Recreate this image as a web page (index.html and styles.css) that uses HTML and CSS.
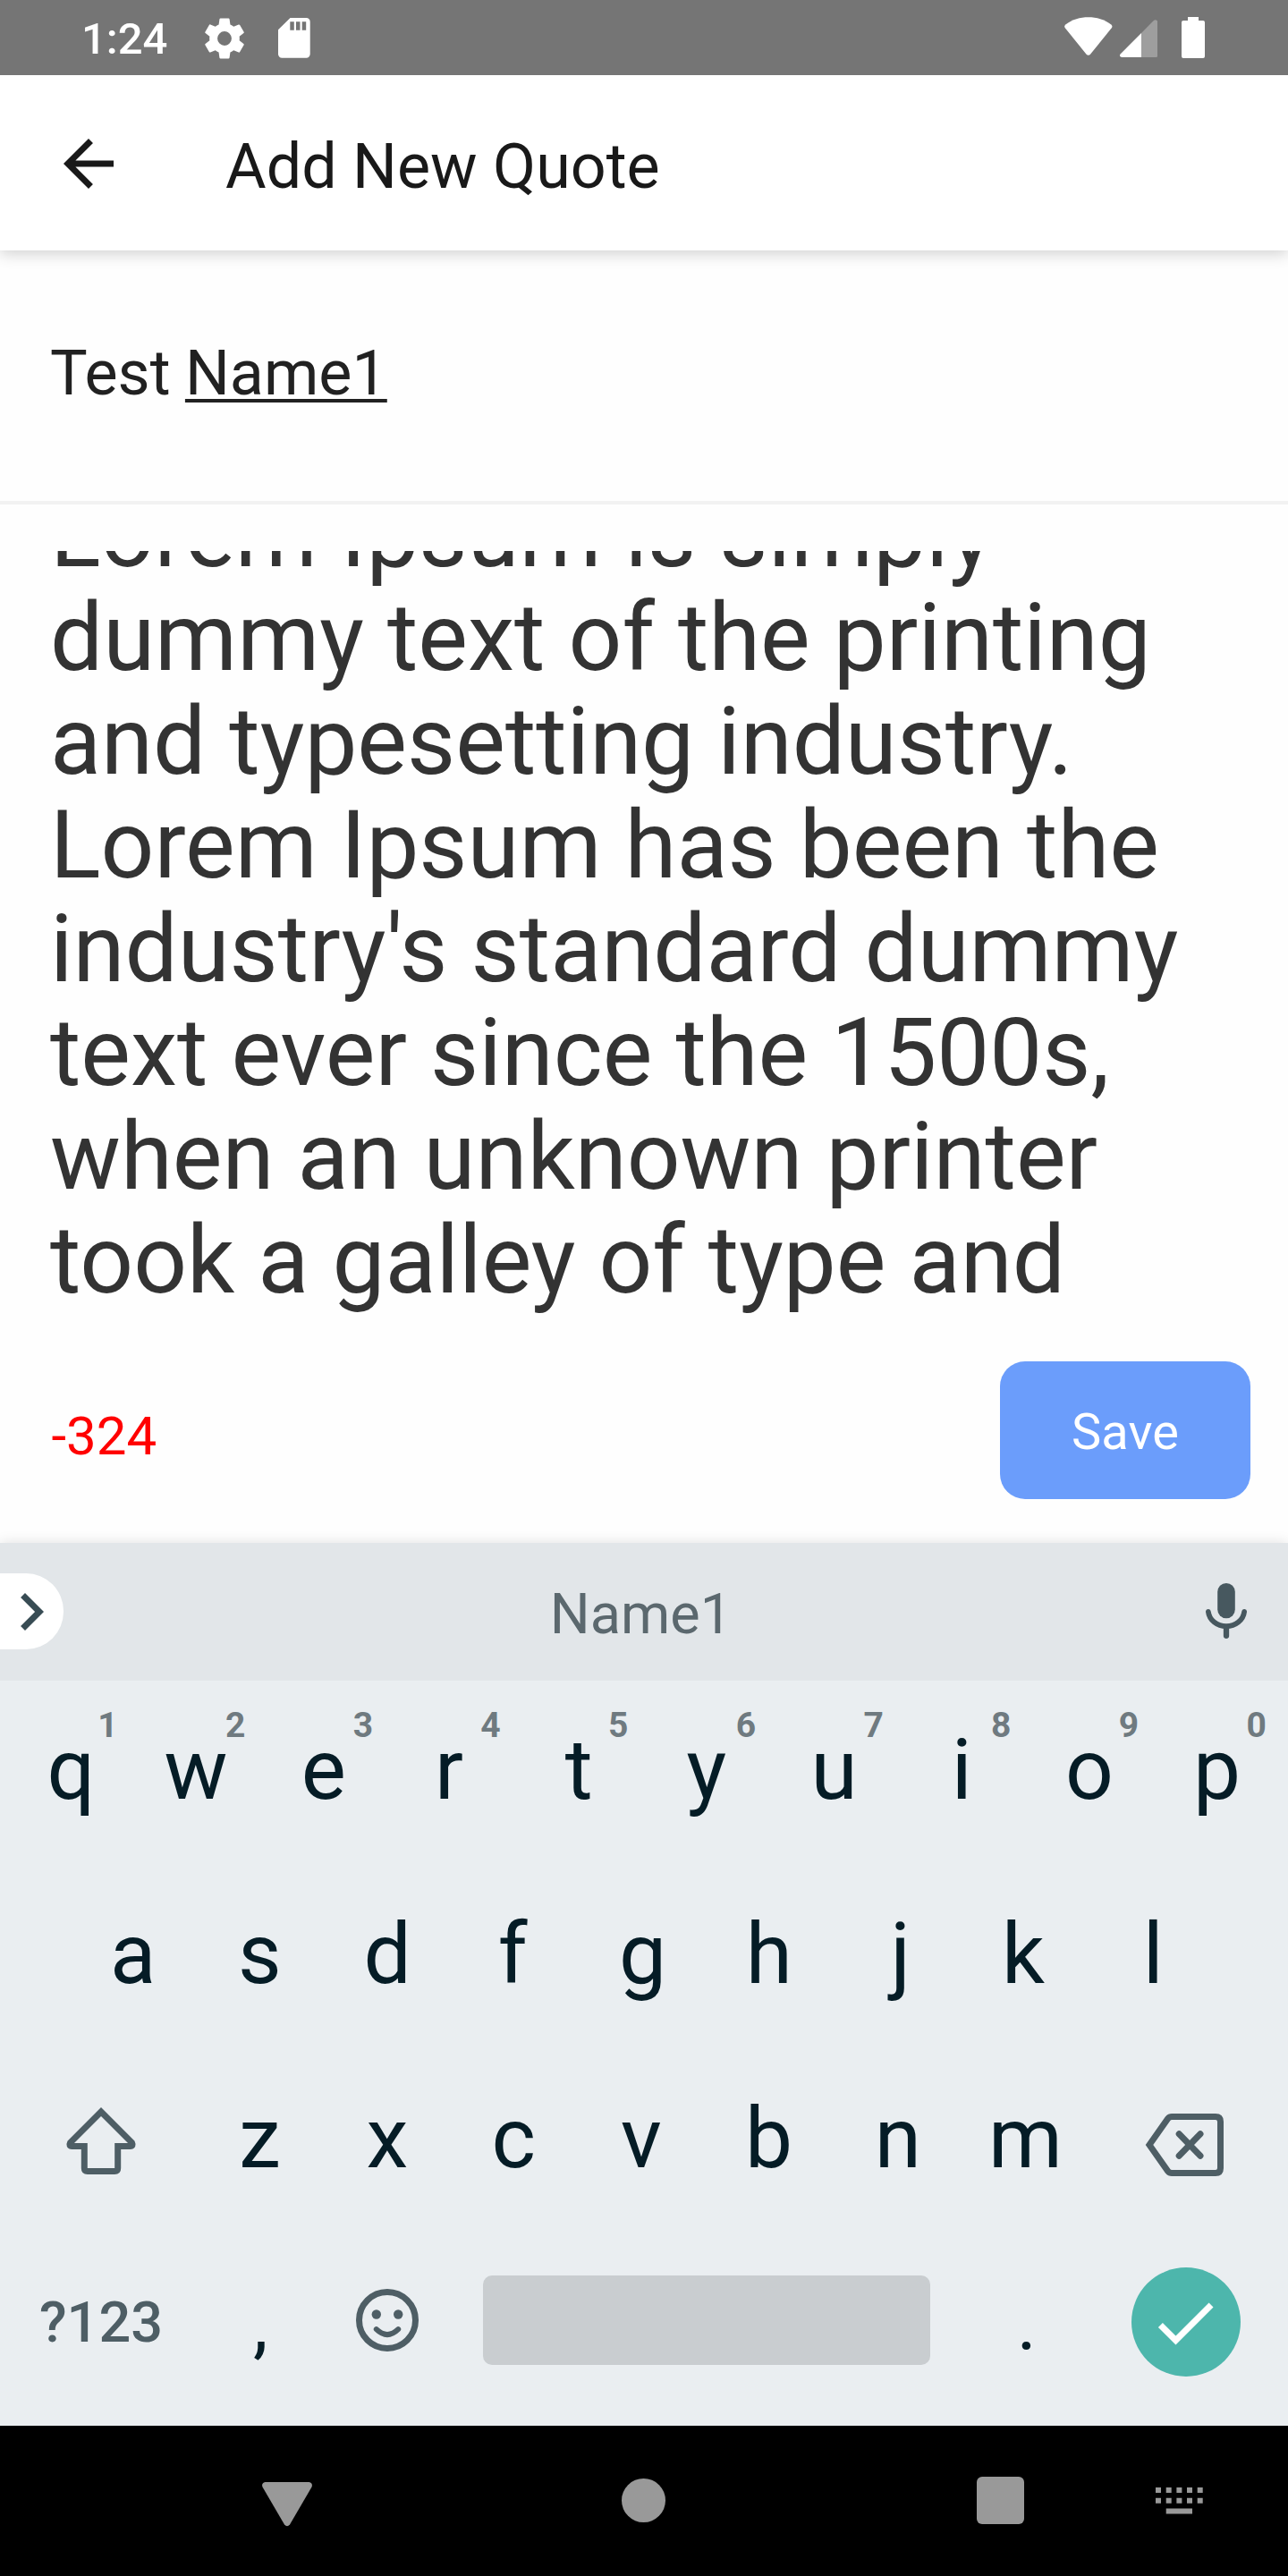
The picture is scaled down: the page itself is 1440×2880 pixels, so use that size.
FILE: index.html
```html
<!DOCTYPE html>
<html lang="en">
<head>
<meta charset="utf-8">
<title>Add New Quote</title>
<link rel="stylesheet" href="styles.css">
</head>
<body>
<div class="screen">
  <div class="status">
    <span class="clock">1:24</span>
    <svg class="gear" viewBox="0 0 24 24"><path fill-rule="evenodd" d="M19.14 12.94c.04-.3.06-.61.06-.94 0-.32-.02-.64-.07-.94l2.03-1.58c.18-.14.23-.41.12-.61l-1.92-3.32c-.12-.22-.37-.29-.59-.22l-2.39.96c-.5-.38-1.03-.7-1.62-.94l-.36-2.54c-.04-.24-.24-.41-.48-.41h-3.84c-.24 0-.43.17-.47.41l-.36 2.54c-.59.24-1.13.57-1.62.94l-2.39-.96c-.22-.08-.47 0-.59.22L2.74 8.87c-.12.21-.08.47.12.61l2.03 1.58c-.05.3-.09.63-.09.94s.02.64.07.94l-2.03 1.58c-.18.14-.23.41-.12.61l1.92 3.32c.12.22.37.29.59.22l2.39-.96c.5.38 1.03.7 1.62.94l.36 2.54c.05.24.24.41.48.41h3.84c.24 0 .44-.17.47-.41l.36-2.54c.59-.24 1.13-.56 1.62-.94l2.39.96c.22.08.47 0 .59-.22l1.92-3.32c.12-.22.07-.47-.12-.61zM12 15.4a3.4 3.4 0 1 1 0-6.8 3.4 3.4 0 0 1 0 6.8z"/></svg>
    <svg class="sd" viewBox="0 0 36 45"><path fill-rule="evenodd" d="M13.5 0H31.5a4.2 4.2 0 0 1 4.2 4.2V40.5a4.2 4.2 0 0 1-4.2 4.2H4.2A4.2 4.2 0 0 1 0 40.5V13.3zM13.3 4.3v9.4h4.5V4.3zM20 4.3v9.4h4.5V4.3zM26.7 4.3v9.4h4.5V4.3z"/></svg>
    <span class="grow"></span>
    <svg class="wifi" viewBox="0 0 54 44"><path d="M.8 12.3Q-.6 10 1.3 8.4C9 2.7 17.5.2 26.8.2S44.6 2.7 52.3 8.4Q54.2 10 52.8 12.3L29.2 41.5Q26.8 44.2 24.4 41.5z"/></svg>
    <svg class="signal" viewBox="0 0 42 42"><path fill="#9e9e9e" d="M24 15 37.8.9Q40-.8 42 1.5V40.5Q42 42 40.5 42H24z"/><path d="M24 15V42H2Q-1.3 41 .8 38.2z"/></svg>
    <svg class="battery" viewBox="0 0 26 46"><path d="M7 0H19V4H24Q26 4 26 6V44Q26 46 24 46H2Q0 46 0 44V6Q0 4 2 4H7z"/></svg>
  </div>

  <header class="appbar">
    <svg class="back" viewBox="0 0 24 24"><path d="M20 11H7.83l5.59-5.59L12 4l-8 8 8 8 1.41-1.41L7.83 13H20z"/></svg>
    <h1>Add New Quote</h1>
  </header>

  <main>
    <div class="name">Test <span class="composing">Name1</span></div>
    <div class="quote">
      <p>Lorem Ipsum is simply<br>dummy text of the printing<br>and typesetting industry.<br>Lorem Ipsum has been the<br>industry's standard dummy<br>text ever since the 1500s,<br>when an unknown printer<br>took a galley of type and</p>
    </div>
    <div class="actions">
      <span class="count">-324</span>
      <button class="save">Save</button>
    </div>
  </main>

  <section class="keyboard">
    <div class="suggest">
      <span class="expand"><svg viewBox="0 0 24 24"><path d="M10 6 8.59 7.41 13.17 12l-4.58 4.59L10 18l6-6z"/></svg></span>
      <span class="word">Name1</span>
      <svg class="mic" viewBox="0 0 46 64"><rect x="13.2" y="0" width="19.6" height="39.3" rx="9.8" fill="#47585f"/><path fill="none" stroke="#47585f" stroke-width="5.8" stroke-linecap="round" d="M2.9 32A20.2 18 0 0 0 43.1 32"/><path stroke="#47585f" stroke-width="6.3" stroke-linecap="round" d="M23 50.5V58.8"/></svg>
    </div>
    <div class="keys">
      <div class="row"><kbd class="right">q<sup>1</sup></kbd><kbd>w<sup>2</sup></kbd><kbd>e<sup>3</sup></kbd><kbd class="left">r<sup>4</sup></kbd><kbd>t<sup>5</sup></kbd><kbd>y<sup>6</sup></kbd><kbd>u<sup>7</sup></kbd><kbd>i<sup>8</sup></kbd><kbd>o<sup>9</sup></kbd><kbd>p<sup>0</sup></kbd></div>
      <div class="row middle"><kbd class="right-slight">a</kbd><kbd>s</kbd><kbd>d</kbd><kbd class="left">f</kbd><kbd>g</kbd><kbd class="left-slight">h</kbd><kbd class="right">j</kbd><kbd class="left">k</kbd><kbd>l</kbd></div>
      <div class="row">
        <span class="wide"><svg class="shift" viewBox="0 0 80 76"><path d="M40 5 5.500 39.600Q3.500 43.500 7.500 43.500H21.300V68Q21.300 71.500 24.800 71.500H55.200Q58.700 71.500 58.700 68V43.500H72.500Q76.500 43.500 74.500 39.600z"/></svg></span><kbd>z</kbd><kbd>x</kbd><kbd class="left-slight">c</kbd><kbd class="left-slight">v</kbd><kbd class="left-slight">b</kbd><kbd>n</kbd><kbd>m</kbd><span class="wide"><svg class="del" viewBox="0 0 90 72"><path d="M5 36 25.800 6.500Q27.500 4.500 30 4.500H79Q84.500 4.500 84.500 10V62Q84.500 67.500 79 67.500H30Q27.500 67.500 25.800 65.500z"/><path stroke-linecap="round" d="M38.200 23.700 62 48.300M62 23.700 38.200 48.300"/></svg></span>
      </div>
      <div class="row">
        <span class="wide symbols">?123</span><kbd class="punct">,</kbd><kbd><svg class="smile" viewBox="0 0 70 70"><circle cx="35" cy="35" r="31.500" fill="none" stroke="#4e5e65" stroke-width="7"/><circle cx="22.800" cy="28.500" r="5.200"/><circle cx="47.200" cy="28.500" r="5.200"/><path fill="none" stroke="#4e5e65" stroke-width="6" stroke-linecap="round" d="M22.800 45.200Q35 57 47.200 45.200"/></svg></kbd><span class="space"></span><kbd class="punct">.</kbd><span class="wide"><span class="enter"><svg viewBox="0 0 24 24"><path d="M9 16.170 4.830 12l-1.420 1.410L9 19 21 7l-1.410-1.410z"/></svg></span></span>
      </div>
    </div>
  </section>

  <nav class="sysnav">
    <svg class="n-back" viewBox="0 0 56 50"><path d="M3.5 0H52.5Q57 1 55.5 5.5L31 47.5Q28 51 25 47.5L.5 5.5Q-1 1 3.5 0z"/></svg>
    <span class="n-home"></span>
    <span class="n-recent"></span>
    <svg class="n-ime" viewBox="0 0 54 30"><path d="M0 0h6v6h-6zM11.7 0h6v6h-6zM23.4 0h6v6h-6zM35 0h6v6h-6zM46.7 0h6v6h-6zM0 11.7h6v6h-6zM11.7 11.7h6v6h-6zM23.4 11.7h6v6h-6zM35 11.7h6v6h-6zM46.7 11.7h6v6h-6zM11.7 23.4h29.3v6h-29.3z"/></svg>
  </nav>
</div>
</body>
</html>
```

FILE: styles.css
```css
* { box-sizing: border-box; }

body {
  margin: 0;
  background: #fff;
  font-family: Roboto, "Liberation Sans", sans-serif;
}

svg { display: block; flex: none; }

.screen {
  width: 1440px;
  height: 2880px;
  display: flex;
  flex-direction: column;
  overflow: hidden;
  background: #fefefe;
}

/* status bar */
.status {
  height: 84px;
  flex: none;
  display: flex;
  align-items: flex-start;
  background: #757575;
  fill: #fff;
  padding: 19px 93px 0 91px;
  z-index: 2;
}
.clock {
  width: 132px;
  font-size: 49px;
  font-weight: 500;
  line-height: 50px;
  color: #fff;
}
.gear { width: 56px; height: 56px; margin-top: -4.5px; }
.sd { width: 36px; height: 45px; margin: 1px 0 0 31.5px; }
.grow { flex: 1; }
.wifi { width: 54px; height: 44px; }
.signal { width: 42px; height: 42px; margin: 3px 0 0 8px; }
.battery { width: 26px; height: 46px; margin-left: 27px; }

/* app bar */
.appbar {
  height: 196px;
  flex: none;
  display: flex;
  align-items: center;
  background: #fff;
  box-shadow: 0 4px 16px rgba(0, 0, 0, .18);
  padding-left: 57px;
  z-index: 1;
}
.back { width: 84px; height: 84px; fill: #191919; margin-top: 2px; }
h1 {
  margin: 8px 0 0 111px;
  font-size: 70px;
  font-weight: 400;
  line-height: 82px;
  color: #191919;
}

/* form */
main { height: 1445px; flex: none; }
.name {
  height: 284px;
  border-bottom: 4px solid #f2f2f2;
  padding: 96px 56px 0;
  font-size: 70px;
  line-height: 82px;
  word-spacing: -1px;
  color: #212121;
}
.composing {
  text-decoration: underline;
  text-decoration-thickness: 3.5px;
  text-underline-offset: 5px;
  text-decoration-skip-ink: none;
}
.quote {
  height: 858px;
  margin-top: 52px;
  padding: 0 56px;
  overflow: hidden;
}
.quote p {
  margin: -76px 0 0;
  font-size: 105px;
  line-height: 116px;
  white-space: nowrap;
  color: #333;
}
.actions {
  display: flex;
  justify-content: space-between;
  align-items: flex-start;
  padding: 48px 42px 0 57.5px;
}
.count {
  padding-top: 48px;
  font-size: 60px;
  line-height: 72px;
  color: #f00;
}
.save {
  width: 280px;
  height: 154px;
  border: 0;
  border-radius: 28px;
  background: #6b9dfb;
  font: 56px/66px Roboto, "Liberation Sans", sans-serif;
  color: #fff;
  padding: 4px 0 0;
}

/* keyboard */
.keyboard {
  height: 987px;
  flex: none;
  background: #eaeef1;
  box-shadow: 0 0 14px rgba(0, 0, 0, .12);
  z-index: 1;
}
.suggest {
  height: 154px;
  display: flex;
  align-items: center;
  background: #e2e6e9;
}
.expand {
  width: 71px;
  height: 85px;
  margin-top: -1px;
  border-radius: 0 42px 42px 0;
  background: #fff;
  overflow: hidden;
}
.expand svg { width: 84px; height: 84px; margin: 1px 0 0 -7px; fill: #384c54; }
.word {
  flex: 1;
  padding: 6px 0 0 14px;
  text-align: center;
  font-size: 63px;
  line-height: 74px;
  color: #5b686e;
}
.mic { width: 46px; height: 64px; margin: -1px 46px 0 0; }

.keys { padding: 0 8px 0 5px; }
.row { height: 206px; display: flex; }
.middle { padding: 0 71.4px; }
kbd {
  position: relative;
  flex: 0 0 142.7px;
  height: 206px;
  padding-top: 44px;
  text-align: center;
  font: 94.5px/112px Roboto, "Liberation Sans", sans-serif;
  color: #051c26;
}
.right { padding-left: 6px; }
.right-slight { padding-left: 2px; }
.left { padding-right: 5px; }
.left-slight { padding-right: 3px; }
sup {
  position: absolute;
  top: 30px;
  right: 16px;
  font-size: 39px;
  font-weight: 700;
  line-height: 40px;
  color: #6f7a80;
}
.wide {
  flex: 0 0 214px;
  display: flex;
  justify-content: center;
  align-items: flex-start;
}
.shift { width: 80px; height: 76px; margin: 64.5px 0 0 2px; fill: none; stroke: #4e5e65; stroke-width: 7; }
.del { width: 90px; height: 72px; margin: 70.5px 0 0; fill: none; stroke: #4e5e65; stroke-width: 7; }
.symbols {
  padding: 63px 0 0 2px;
  font-size: 63px;
  font-weight: 500;
  line-height: 74px;
  color: #4e5e65;
}
.punct { font-size: 84px; padding: 46px 0 0 2px; }
.smile { width: 70px; height: 70px; margin: 18px auto 0; fill: #4e5e65; }
.space {
  flex: 0 0 500px;
  height: 100px;
  margin: 47px 35.5px 0 35.5px;
  border-radius: 10px;
  background: #c9cdd0;
}
.enter {
  width: 122px;
  height: 122px;
  border-radius: 50%;
  background: #4db6ac;
  margin: 38px 0 0 1px;
  padding: 20px 0 0 18.5px;
}
.enter svg { width: 84px; height: 84px; fill: #fff; }

/* system navigation */
.sysnav {
  flex: 1;
  display: flex;
  align-items: flex-start;
  background: #000;
  padding-left: 293px;
  fill: #999;
  z-index: 2;
}
.n-back { width: 56px; height: 50px; margin-top: 63px; }
.n-home { width: 49px; height: 49px; margin: 59px 0 0 346px; border-radius: 50%; background: #999; }
.n-recent { width: 53px; height: 53px; margin: 57px 0 0 347.5px; border-radius: 6px; background: #999; }
.n-ime { width: 54px; height: 30px; margin: 69px 0 0 147px; }
```
